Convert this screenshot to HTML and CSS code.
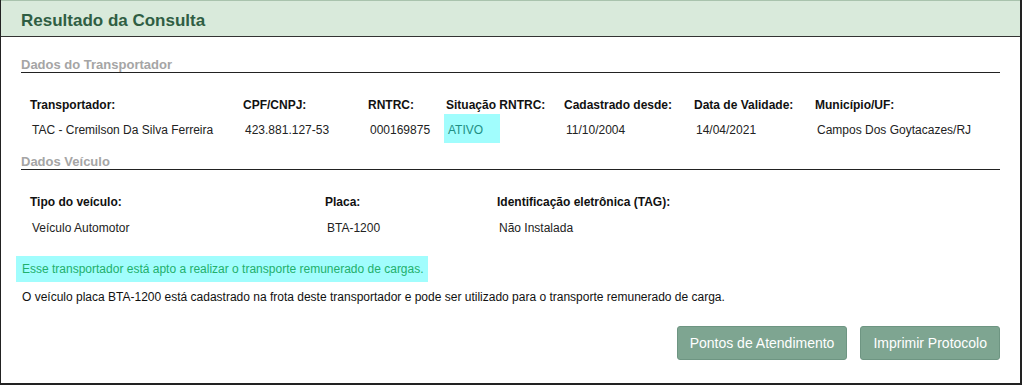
FILE: index.html
```html
<!DOCTYPE html>
<html lang="pt-BR">
<head>
    <meta charset="UTF-8">
    <title>Resultado da Consulta</title>
    <link rel="stylesheet" href="styles.css">
</head>
<body>
    <div class="panel">
        <div class="panel-heading">Resultado da Consulta</div>
        <div class="panel-body">
            <fieldset class="group">
                <legend>Dados do Transportador</legend>
                <table class="data transp">
                    <tr>
                        <th>Transportador:</th>
                        <th>CPF/CNPJ:</th>
                        <th>RNTRC:</th>
                        <th>Situação RNTRC:</th>
                        <th>Cadastrado desde:</th>
                        <th>Data de Validade:</th>
                        <th>Município/UF:</th>
                    </tr>
                    <tr>
                        <td>TAC - Cremilson Da Silva Ferreira</td>
                        <td>423.881.127-53</td>
                        <td>000169875</td>
                        <td><span class="ativo">ATIVO</span></td>
                        <td>11/10/2004</td>
                        <td>14/04/2021</td>
                        <td>Campos Dos Goytacazes/RJ</td>
                    </tr>
                </table>
            </fieldset>

            <fieldset class="group">
                <legend>Dados Veículo</legend>
                <table class="data veic">
                    <tr>
                        <th>Tipo do veículo:</th>
                        <th>Placa:</th>
                        <th>Identificação eletrônica (TAG):</th>
                    </tr>
                    <tr>
                        <td>Veículo Automotor</td>
                        <td>BTA-1200</td>
                        <td>Não Instalada</td>
                    </tr>
                </table>
            </fieldset>

            <div class="alert-ok">Esse transportador está apto a realizar o transporte remunerado de cargas.</div>
            <p class="note">O veículo placa BTA-1200 está cadastrado na frota deste transportador e pode ser utilizado para o transporte remunerado de carga.</p>

            <div class="actions">
                <button type="button" class="btn">Pontos de Atendimento</button>
                <button type="button" class="btn">Imprimir Protocolo</button>
            </div>
        </div>
    </div>
</body>
</html>
```

FILE: styles.css
```css
body {
    margin: 0;
    font-family: 'Liberation Sans', Arial, sans-serif;
    font-size: 12px;
    color: #222;
    background: #fff;
}

.panel {
    width: 1022px;
    height: 385px;
    box-sizing: border-box;
    border: 1px solid #222;
    border-top: none;
    border-right-width: 2px;
    border-bottom-width: 2px;
}

.panel-heading {
    background-color: #d9eadb;
    color: #2f5e43;
    font-size: 17px;
    font-weight: bold;
    height: 35px;
    line-height: 39px;
    padding-left: 20px;
    border-top: 1px solid #a9c3ad;
    border-bottom: 1px solid #333;
}

.panel-body {
    padding: 20px 20px 0 14px;
}

.group {
    border: none;
    margin: 0 0 0 6px;
    padding: 0;
}

.group legend {
    display: block;
    width: 100%;
    padding: 0;
    color: #a5a5a5;
    font-size: 13px;
    font-weight: bold;
    border-bottom: 1px solid #222;
    line-height: 15px;
}

.data {
    border-collapse: collapse;
    margin-left: 3px;
}

.data th {
    text-align: left;
    font-weight: bold;
    padding: 0 6px 0 6px;
    height: 24px;
    vertical-align: bottom;
    color: #111;
}

.data td {
    padding: 4px 6px 0 8px;
    height: 25px;
    color: #222;
}

.transp {
    margin-top: 15px;
    margin-bottom: 11px;
}

.transp td {
    vertical-align: baseline;
}

.transp th:nth-child(1) { width: 201px; }
.transp th:nth-child(2) { width: 113px; }
.transp th:nth-child(3) { width: 66px; }
.transp th:nth-child(4) { width: 106px; }
.transp th:nth-child(5) { width: 118px; }
.transp th:nth-child(6) { width: 109px; }

.transp td:nth-child(4) {
    padding: 2px 6px 0 4px;
}

.ativo {
    display: inline-block;
    background-color: #a1fdfd;
    color: #1f8f83;
    padding: 9px 17px 6px 4px;
    line-height: 14px;
}

.veic {
    margin-top: 15px;
    margin-bottom: 16px;
}

.veic td {
    padding-top: 6px;
}

.veic th:nth-child(1) { width: 283px; }
.veic th:nth-child(2) { width: 160px; }

.alert-ok {
    display: inline-block;
    background-color: #a1fdfd;
    color: #22b06c;
    padding: 0 4px 0 6px;
    line-height: 26px;
    margin-left: 1px;
}

.note {
    margin: 8px 0 0 7px;
    color: #111;
}

.actions {
    display: flex;
    justify-content: flex-end;
    gap: 13px;
    margin-top: 22px;
    padding-right: 0;
}

.btn {
    font-family: 'Liberation Sans', Arial, sans-serif;
    font-size: 14px;
    color: #fff;
    background-color: #7ea591;
    border: 1px solid #6e9582;
    border-radius: 3px;
    height: 34px;
    padding: 0 12px;
    cursor: pointer;
}

.btn:hover {
    background-color: #6e9582;
}
```
